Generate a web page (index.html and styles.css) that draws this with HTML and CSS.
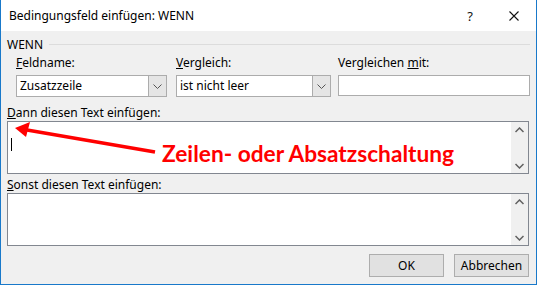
FILE: index.html
```html
<!DOCTYPE html>
<html lang="de">
<head>
  <meta charset="UTF-8">
  <title>Bedingungsfeld einfügen: WENN</title>
  <link rel="stylesheet" href="styles.css">
</head>
<body>

  <div class="dialog">
    <div class="titlebar">
      <span class="title">Bedingungsfeld einfügen: WENN</span>
      <span class="help">?</span>
      <span class="close">
        <svg width="10" height="10" viewBox="0 0 10 10"><path d="M0.5 0.5 L9.5 9.5 M9.5 0.5 L0.5 9.5" stroke="#111" stroke-width="1.1" fill="none"/></svg>
      </span>
    </div>

    <div class="content">
      <div class="group-head">
        <span>WENN</span>
        <span class="group-line"></span>
      </div>

      <div class="fields">
        <div class="field">
          <label><u>F</u>eldname:</label>
          <div class="combo first">
            <span class="combo-text">Zusatzzeile</span>
            <span class="combo-btn">
              <svg width="9" height="5" viewBox="0 0 9 5"><path d="M0.5 0.5 L4.5 4.5 L8.5 0.5" stroke="#555" fill="none"/></svg>
            </span>
          </div>
        </div>
        <div class="field">
          <label><u>V</u>ergleich:</label>
          <div class="combo second">
            <span class="combo-text">ist nicht leer</span>
            <span class="combo-btn">
              <svg width="9" height="5" viewBox="0 0 9 5"><path d="M0.5 0.5 L4.5 4.5 L8.5 0.5" stroke="#555" fill="none"/></svg>
            </span>
          </div>
        </div>
        <div class="field">
          <label>Vergleichen <u>m</u>it:</label>
          <div class="textbox"></div>
        </div>
      </div>

      <label class="area-label"><u>D</u>ann diesen Text einfügen:</label>
      <div class="textarea">
        <span class="caret"></span>
        <div class="scroll">
          <svg width="9" height="6" viewBox="0 0 9 6"><path d="M0.5 5 L4.5 1 L8.5 5" stroke="#606060" stroke-width="1.5" fill="none"/></svg>
          <svg width="9" height="6" viewBox="0 0 9 6"><path d="M0.5 1 L4.5 5 L8.5 1" stroke="#606060" stroke-width="1.5" fill="none"/></svg>
        </div>
      </div>

      <label class="area-label second"><u>S</u>onst diesen Text einfügen:</label>
      <div class="textarea">
        <div class="scroll">
          <svg width="9" height="6" viewBox="0 0 9 6"><path d="M0.5 5 L4.5 1 L8.5 5" stroke="#606060" stroke-width="1.5" fill="none"/></svg>
          <svg width="9" height="6" viewBox="0 0 9 6"><path d="M0.5 1 L4.5 5 L8.5 1" stroke="#606060" stroke-width="1.5" fill="none"/></svg>
        </div>
      </div>

      <div class="buttons">
        <button class="btn">OK</button>
        <button class="btn">Abbrechen</button>
      </div>
    </div>

    <!-- Anmerkung über dem Dialog -->
    <svg class="arrow" width="537" height="285" viewBox="0 0 537 285">
      <path d="M155 152 L27 130" stroke="#ff0000" stroke-width="3.5" fill="none"/>
      <path d="M15 128 L30 122 L26 137 Z" fill="#ff0000"/>
    </svg>
    <span class="note">Zeilen- oder Absatzschaltung</span>
  </div>

</body>
</html>
```

FILE: styles.css
```css
html, body {
  margin: 0;
  padding: 0;
}

body {
  font-family: 'Noto Sans', 'Open Sans', sans-serif;
  font-size: 12px;
  color: #000;
  background: #fff;
}

.dialog {
  position: relative;
  width: 537px;
  height: 285px;
  box-sizing: border-box;
  border: 1px solid #1979ca;
  border-top: none;
  background: #f0f0f0;
  overflow: hidden;
}

.titlebar {
  display: flex;
  align-items: center;
  height: 31px;
  background: #fff;
}

.title {
  margin-left: 8px;
  color: #000;
}

.help {
  margin-left: auto;
  margin-right: 36px;
  font-size: 13px;
  color: #111;
}

.close {
  display: flex;
  margin-right: 17px;
}

.content {
  padding: 0 6px;
}

.group-head {
  display: flex;
  align-items: center;
  height: 15px;
  margin-top: 6px;
}

.group-line {
  flex: 1;
  height: 1px;
  margin-left: 6px;
  background: #dcdcdc;
}

.fields {
  display: grid;
  grid-template-columns: 160px 162px 1fr;
  padding-left: 9px;
  margin-top: 3px;
}

.field label {
  display: block;
  height: 15px;
  line-height: 15px;
  margin-bottom: 5px;
}

.combo {
  display: flex;
  height: 22px;
  box-sizing: border-box;
  border: 1px solid #acacac;
  background: #fff;
}

.combo.first {
  width: 151px;
}

.combo.second {
  width: 155px;
}

.combo-text {
  flex: 1;
  padding-left: 3px;
  line-height: 20px;
}

.combo-btn {
  display: flex;
  align-items: center;
  justify-content: center;
  width: 17px;
  background: #e5e5e5;
  border-left: 1px solid #acacac;
}

.textbox {
  height: 21px;
  box-sizing: border-box;
  margin-top: 1px;
  border: 1px solid #acacac;
  background: #fff;
}

.area-label {
  display: block;
  height: 15px;
  line-height: 15px;
  margin-top: 8px;
  margin-bottom: 1px;
}

.area-label.second {
  margin-top: 3px;
}

.textarea {
  position: relative;
  display: flex;
  height: 53px;
  box-sizing: border-box;
  margin-right: 1px;
  border: 1px solid #828790;
  background: #fff;
}

.caret {
  width: 1px;
  height: 13px;
  margin: 16px 0 0 3px;
  background: #000;
}

.scroll {
  display: flex;
  flex-direction: column;
  align-items: center;
  justify-content: space-between;
  width: 17px;
  margin-left: auto;
  padding: 5px 0 4px;
  box-sizing: border-box;
  background: #f0f0f0;
}

.buttons {
  display: flex;
  justify-content: flex-end;
  gap: 10px;
  margin-top: 8px;
  margin-right: 1px;
}

.btn {
  width: 75px;
  height: 23px;
  border: 1px solid #adadad;
  background: #e1e1e1;
  font-family: inherit;
  font-size: 12px;
  color: #000;
  padding: 0;
}

.arrow {
  position: absolute;
  left: -1px;
  top: 0;
}

.note {
  position: absolute;
  left: 161px;
  top: 140px;
  font-family: 'Lato', 'Open Sans', sans-serif;
  font-weight: bold;
  font-size: 22.7px;
  color: #ff0000;
  white-space: nowrap;
}
```
